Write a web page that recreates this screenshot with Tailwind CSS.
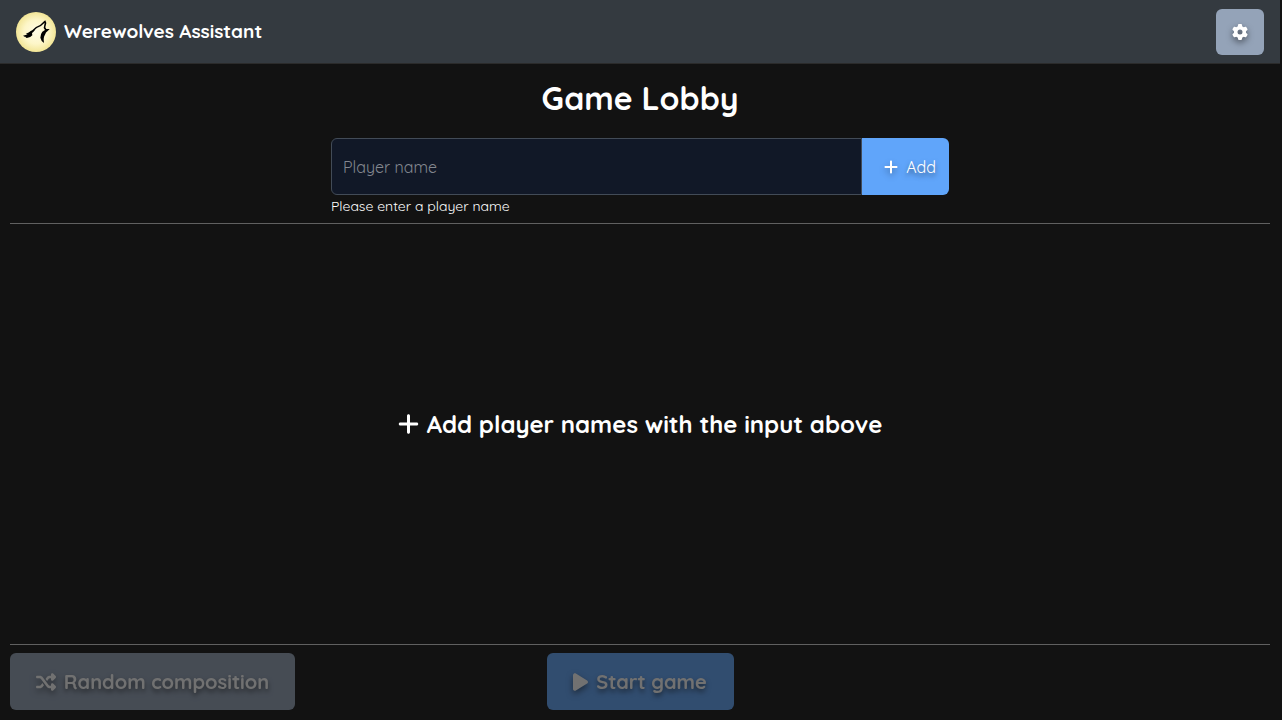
<!DOCTYPE html>
<html lang="en">
<head>
<meta charset="utf-8">
<meta name="viewport" content="width=device-width, initial-scale=1">
<title>Werewolves Assistant</title>
<script src="https://cdn.jsdelivr.net/npm/@tailwindcss/browser@4"></script>
</head>
<body class="flex min-h-screen flex-col bg-[#121212] pr-0.5 font-[Quicksand,Inter,sans-serif] text-white">
<header class="flex h-16 items-center justify-between border-b border-[#2b2b2b] bg-[#343a40] px-4">
  <a href="#" class="flex items-center gap-2 text-[19px] font-bold">
    <svg class="size-10" viewBox="0 0 120 120" aria-hidden="true">
      <defs><radialGradient id="moon"><stop offset="0" stop-color="#fffce6"/><stop offset=".6" stop-color="#fdf6c8"/><stop offset="1" stop-color="#f2e596"/></radialGradient></defs>
      <circle cx="60" cy="60" r="60" fill="url(#moon)"/>
      <path d="M21 71Q30 70 35 66L29 65Q39 62 45 56L57 53L52 60L48 63L49 70Q41 80 28 78L32 75Q25 75 21 71Z"/>
      <path d="M47 56Q57 44 72 39L84 28L88 25L91 33L88 46L91 51L101 51L95 57Q89 61 87 68Q81 76 84 93Q75 87 73 77Q73 66 79 59L87 54L83 48L86 32L75 42Q61 46 53 57Z"/>
    </svg>
    <span>Werewolves Assistant</span>
  </a>
  <button type="button" aria-label="Game options" class="flex h-[46px] w-12 items-center justify-center rounded-md bg-[#94a3b8]">
    <svg class="size-4 drop-shadow-[0_3px_3px_rgba(0,0,0,0.5)]" viewBox="0 0 512 512" fill="currentColor" aria-hidden="true"><path d="M495.9 166.6c3.2 8.7 .5 18.4-6.4 24.6l-43.3 39.4c1.1 8.3 1.7 16.8 1.7 25.4s-.6 17.1-1.7 25.4l43.3 39.4c6.9 6.2 9.6 15.9 6.4 24.6c-4.4 11.9-9.7 23.3-15.8 34.3l-4.7 8.1c-6.6 11-14 21.4-22.1 31.2c-5.9 7.2-15.7 9.6-24.5 6.8l-55.7-17.7c-13.4 10.3-28.2 18.9-44 25.4l-12.5 57.1c-2 9.1-9 16.3-18.2 17.8c-13.8 2.3-28 3.5-42.5 3.5s-28.7-1.2-42.5-3.5c-9.2-1.5-16.2-8.7-18.2-17.8l-12.5-57.1c-15.8-6.5-30.6-15.1-44-25.4L83.1 425.9c-8.8 2.8-18.6 .3-24.5-6.8c-8.1-9.8-15.5-20.2-22.1-31.2l-4.7-8.1c-6.1-11-11.4-22.4-15.8-34.3c-3.2-8.7-.5-18.4 6.4-24.6l43.3-39.4C64.6 273.1 64 264.6 64 256s.6-17.1 1.7-25.4L22.4 191.2c-6.9-6.2-9.6-15.9-6.4-24.6c4.4-11.9 9.7-23.3 15.8-34.3l4.7-8.1c6.6-11 14-21.4 22.1-31.2c5.9-7.2 15.7-9.6 24.5-6.8l55.7 17.7c13.4-10.3 28.2-18.9 44-25.4l12.5-57.1c2-9.1 9-16.3 18.2-17.8C227.3 1.2 241.5 0 256 0s28.7 1.2 42.5 3.5c9.2 1.5 16.2 8.7 18.2 17.8l12.5 57.1c15.8 6.5 30.6 15.1 44 25.4l55.7-17.7c8.8-2.8 18.6-.3 24.5 6.8c8.1 9.8 15.5 20.2 22.1 31.2l4.7 8.1c6.1 11 11.4 22.4 15.8 34.3zM256 336a80 80 0 1 0 0-160 80 80 0 1 0 0 160z"/></svg>
  </button>
</header>
<main class="flex grow flex-col px-2.5 pb-2.5">
  <h1 class="mt-3.5 text-center text-[32px] leading-10 font-bold">Game Lobby</h1>
  <form class="mx-auto mt-5 w-1/2 px-1.5">
    <div class="flex h-[57px]">
      <input id="player" type="text" placeholder="Player name" aria-label="Player name" aria-describedby="player-help" class="min-w-0 grow rounded-l-md border border-[#424b57] bg-[#111827] px-[11px] text-base text-white placeholder:text-[#83878f]">
      <button type="button" class="flex w-[87px] items-center justify-end gap-2 rounded-r-md bg-[#60a5fa] pr-[13px] text-base text-shadow-[0_3px_5px_rgba(0,0,0,0.5)]">
        <svg class="h-4 w-3.5 drop-shadow-[0_3px_3px_rgba(0,0,0,0.3)]" viewBox="0 0 448 512" fill="currentColor" aria-hidden="true"><path d="M256 80c0-17.7-14.3-32-32-32s-32 14.3-32 32V224H48c-17.7 0-32 14.3-32 32s14.3 32 32 32H192V432c0 17.7 14.3 32 32 32s32-14.3 32-32V288H400c17.7 0 32-14.3 32-32s-14.3-32-32-32H256V80z"/></svg>
        Add
      </button>
    </div>
    <p id="player-help" class="mt-px text-sm">Please enter a player name</p>
  </form>
  <hr class="mt-[7px] border-[#606060]">
  <section class="flex grow items-center justify-center">
    <h2 class="flex -translate-y-2.5 items-center gap-2 text-2xl font-bold">
      <svg class="h-6 w-[21px]" viewBox="0 0 448 512" fill="currentColor" aria-hidden="true"><path d="M256 80c0-17.7-14.3-32-32-32s-32 14.3-32 32V224H48c-17.7 0-32 14.3-32 32s14.3 32 32 32H192V432c0 17.7 14.3 32 32 32s32-14.3 32-32V288H400c17.7 0 32-14.3 32-32s-14.3-32-32-32H256V80z"/></svg>
      Add player names with the input above
    </h2>
  </section>
  <hr class="mb-2 border-[#606060]">
  <footer class="grid grid-cols-3 text-xl font-bold">
    <button type="button" disabled class="flex h-[57px] w-[285px] items-center justify-center gap-2 justify-self-start rounded-md bg-[#94a3b8] opacity-40 text-shadow-[0_3px_5px_rgba(0,0,0,0.6)]">
      <svg class="size-5 drop-shadow-[0_3px_3px_rgba(0,0,0,0.5)]" viewBox="0 0 512 512" fill="currentColor" aria-hidden="true"><path d="M403.8 34.4c12-5 25.7-2.2 34.9 6.9l64 64c6 6 9.4 14.1 9.4 22.6s-3.4 16.6-9.4 22.6l-64 64c-9.2 9.2-22.9 11.9-34.9 6.9s-19.8-16.6-19.8-29.6V160H352c-10.1 0-19.6 4.7-25.6 12.8L284 229.3 244 176l31.2-41.6C293.3 110.2 321.8 96 352 96h32V64c0-12.9 7.8-24.6 19.8-29.6zM164 282.7L204 336l-31.2 41.6C154.7 401.8 126.2 416 96 416H32c-17.7 0-32-14.3-32-32s14.3-32 32-32H96c10.1 0 19.6-4.7 25.6-12.8L164 282.7zm274.6 188c-9.2 9.2-22.9 11.9-34.9 6.9s-19.8-16.6-19.8-29.6V416H352c-30.2 0-58.7-14.2-76.8-38.4L121.6 172.8c-6-8.1-15.5-12.8-25.6-12.8H32c-17.7 0-32-14.3-32-32s14.3-32 32-32H96c30.2 0 58.7 14.2 76.8 38.4L326.4 339.2c6 8.1 15.5 12.8 25.6 12.8h32V320c0-12.9 7.8-24.6 19.8-29.6s25.7-2.2 34.9 6.9l64 64c6 6 9.4 14.1 9.4 22.6s-3.4 16.6-9.4 22.6l-64 64z"/></svg>
      Random composition
    </button>
    <button type="button" disabled class="flex h-[57px] w-[187px] items-center justify-center gap-2 justify-self-center rounded-md bg-[#60a5fa] opacity-40 text-shadow-[0_3px_5px_rgba(0,0,0,0.6)]">
      <svg class="h-5 w-[15px] drop-shadow-[0_3px_3px_rgba(0,0,0,0.5)]" viewBox="0 0 384 512" fill="currentColor" aria-hidden="true"><path d="M73 39c-14.8-9.1-33.4-9.4-48.5-.9S0 62.6 0 80V432c0 17.4 9.4 33.4 24.5 41.9s33.7 8.1 48.5-.9L361 297c14.3-8.7 23-24.2 23-41s-8.7-32.2-23-41L73 39z"/></svg>
      Start game
    </button>
  </footer>
</main>
</body>
</html>
